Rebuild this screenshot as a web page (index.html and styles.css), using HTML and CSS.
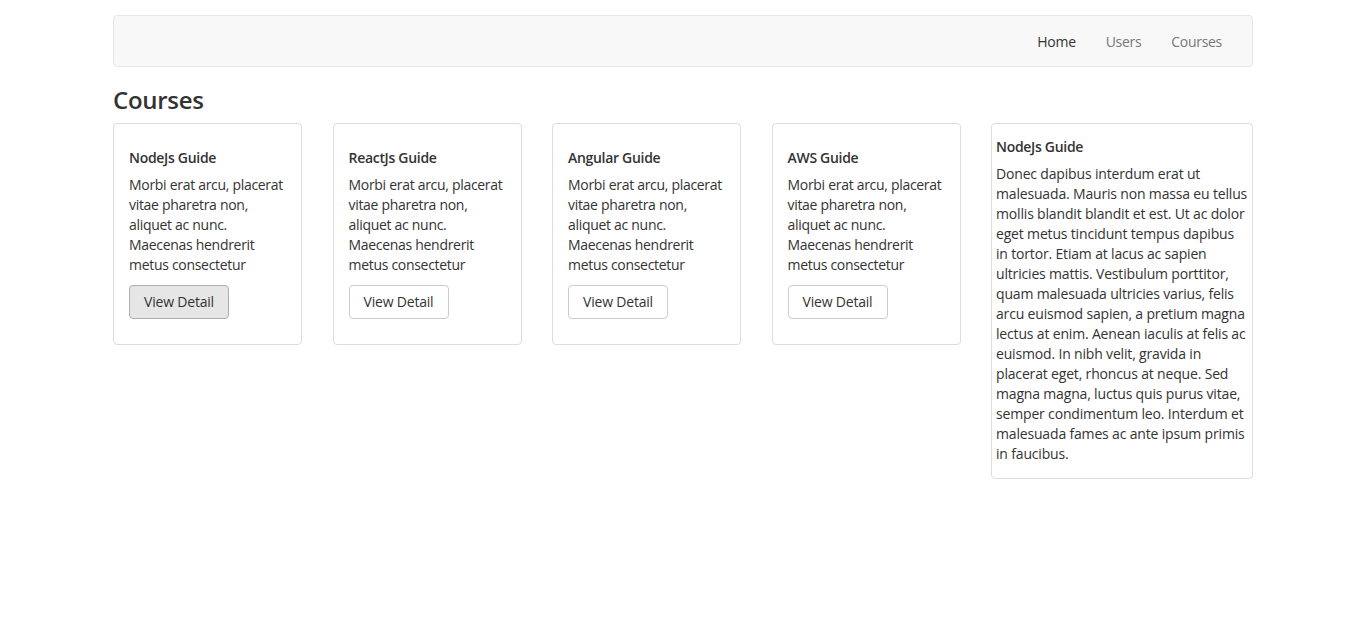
FILE: index.html
```html
<!DOCTYPE html>
<html lang="en">
<head>
<meta charset="utf-8">
<title>Courses</title>
<link rel="stylesheet" href="styles.css">
</head>
<body>
<div class="container">
  <nav class="navbar">
    <ul class="nav">
      <li><a class="active" href="#">Home</a></li>
      <li><a href="#">Users</a></li>
      <li><a href="#">Courses</a></li>
    </ul>
  </nav>
  <h3 class="page-title">Courses</h3>
  <div class="cards">
    <div class="card">
      <h5>NodeJs Guide</h5>
      <p>Morbi erat arcu, placerat vitae pharetra non, aliquet ac nunc. Maecenas hendrerit metus consectetur</p>
      <button class="btn btn-hover">View Detail</button>
    </div>
    <div class="card">
      <h5>ReactJs Guide</h5>
      <p>Morbi erat arcu, placerat vitae pharetra non, aliquet ac nunc. Maecenas hendrerit metus consectetur</p>
      <button class="btn">View Detail</button>
    </div>
    <div class="card">
      <h5>Angular Guide</h5>
      <p>Morbi erat arcu, placerat vitae pharetra non, aliquet ac nunc. Maecenas hendrerit metus consectetur</p>
      <button class="btn">View Detail</button>
    </div>
    <div class="card">
      <h5>AWS Guide</h5>
      <p>Morbi erat arcu, placerat vitae pharetra non, aliquet ac nunc. Maecenas hendrerit metus consectetur</p>
      <button class="btn">View Detail</button>
    </div>
    <div class="card card-detail">
      <h5>NodeJs Guide</h5>
      <p>Donec dapibus interdum erat ut malesuada. Mauris non massa eu tellus mollis blandit blandit et est. Ut ac dolor eget metus tincidunt tempus dapibus in tortor. Etiam at lacus ac sapien ultricies mattis. Vestibulum porttitor, quam malesuada ultricies varius, felis arcu euismod sapien, a pretium magna lectus at enim. Aenean iaculis at felis ac euismod. In nibh velit, gravida in placerat eget, rhoncus at neque. Sed magna magna, luctus quis purus vitae, semper condimentum leo. Interdum et malesuada fames ac ante ipsum primis in faucibus.</p>
    </div>
  </div>
</div>
</body>
</html>
```
FILE: styles.css
```css
* { box-sizing: border-box; }
html, body { margin: 0; padding: 0; background: #fff; }
body {
  font-family: "Open Sans", "Noto Sans", sans-serif;
  font-size: 14px;
  line-height: 20px;
  color: #333;
  letter-spacing: -0.3px;
}
.container {
  width: 1140px;
  margin-left: 113px;
  padding-top: 15px;
}
.navbar {
  height: 52px;
  background: #f8f8f8;
  border: 1px solid #e7e7e7;
  border-radius: 4px;
  margin-bottom: 20px;
  display: flex;
  justify-content: flex-end;
}
.nav {
  list-style: none;
  margin: 0 15px 0 0;
  padding: 0;
  display: flex;
}
.nav a {
  display: block;
  padding: 16px 15px 14px;
  line-height: 20px;
  color: #777;
  text-decoration: none;
}
.nav a.active { color: #333; }
.page-title {
  font-size: 24px;
  font-weight: 600;
  line-height: 1.1;
  margin: 20px 0 10px;
  color: #333;
}
.cards {
  display: grid;
  grid-template-columns: repeat(4, 189px) 1fr;
  column-gap: 30.5px;
  align-items: start;
}
.card {
  border: 1px solid #ddd;
  border-radius: 4px;
  padding: 15px;
}
.card h5 {
  font-size: 14px;
  font-weight: 600;
  line-height: 1.1;
  margin: 11px 0 9px;
}
.card p { margin: 0 0 10px; }
.btn {
  font-family: inherit;
  font-size: 14px;
  letter-spacing: -0.2px;
  line-height: 20px;
  color: #333;
  background: #fff;
  border: 1px solid #ccc;
  border-radius: 4px;
  padding: 6px 12px;
  height: 34px;
  width: 100px;
  margin-bottom: 10px;
  display: block;
}
.btn-hover {
  background: #e6e6e6;
  border-color: #adadad;
}
.card-detail { padding: 4px; }
.card-detail p {
  margin-bottom: 10px;
  letter-spacing: -0.17px;
}
```
